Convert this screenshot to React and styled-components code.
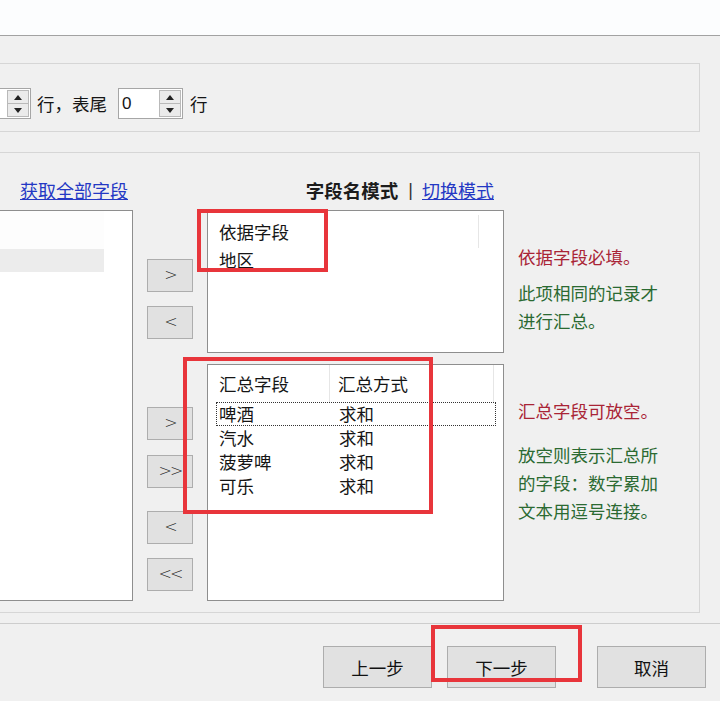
import React from 'react';
import styled, { createGlobalStyle, css } from 'styled-components';

const GlobalStyle = createGlobalStyle`
	html, body {
		margin: 0;
		padding: 0;
		background: #f0f0f0;
	}
	* {
		box-sizing: border-box;
	}
`;

const UI_FONT = '"Noto Sans CJK SC", "Liberation Sans", sans-serif';
const LIST_BORDER = '#8e8e8e';
const RED = '#e8353b';

const Window = styled.div`
	width: 720px;
	height: 701px;
	overflow: hidden;
	display: flex;
	flex-direction: column;
	background: #f0f0f0;
	font-family: ${ UI_FONT };
	font-size: 17px;
	color: #151515;
`;

const TopBand = styled.div`
	flex-shrink: 0;
	height: 36px;
	background: #fcfdfe;
	border-bottom: 1px solid #a2a2a2;
`;

const Content = styled.div`
	display: flex;
	flex-direction: column;
	padding: 27px 20px 0 0;
`;

// group boxes run off the left edge of the picture
const GroupBox = styled.div`
	border: 1px solid #d6d6d6;
	border-left: none;
	height: ${ ( { $h } ) => $h }px;
	margin-bottom: ${ ( { $mb } ) => $mb || 0 }px;
`;

const RangeRow = styled.div`
	display: flex;
	align-items: center;
	height: 31px;
	margin-top: 24px;
	line-height: 24px;
`;

const SpinInput = styled.div`
	width: ${ ( { $w } ) => $w }px;
	height: 31px;
	display: flex;
	align-items: center;
	justify-content: space-between;
	margin-left: ${ ( { $ml } ) => $ml || 0 }px;
	background: #fff;
	border: 1px solid #a6a6a6;
	${ ( { $cut } ) => $cut && css`
		border-left: none;
	` }
`;

const SpinValue = styled.span`
	padding-left: 3px;
	font-family: "Liberation Sans", sans-serif;
	font-size: 17px;
`;

const SpinButtons = styled.div`
	width: 22px;
	height: 27px;
	margin-right: 1px;
	display: flex;
	flex-direction: column;
	border: 1px solid #b9b9b9;
	background: #ebebeb;
`;

const SpinHalf = styled.div`
	flex: 1;
	display: flex;
	align-items: center;
	justify-content: center;
	& + & {
		border-top: 1px solid #b9b9b9;
	}
`;

const Arrow = styled.span`
	width: 0;
	height: 0;
	border-left: 4px solid transparent;
	border-right: 4px solid transparent;
	${ ( { $down } ) => $down
		? css`border-top: 5px solid #222;`
		: css`border-bottom: 5px solid #222;` }
`;

const Label = styled.span`
	margin-left: ${ ( { $ml } ) => $ml || 0 }px;
	font-size: 17.5px;
	white-space: nowrap;
`;

const FieldsGrid = styled.div`
	display: grid;
	grid-template-columns: 133px 46px 297px 1fr;
	grid-template-rows: 57px 391px;
	column-gap: 14px;
	padding-bottom: 11px;
`;

const HeadCell = styled.div`
	display: flex;
	justify-content: flex-end;
	align-items: center;
	padding: 0 ${ ( { $pr } ) => $pr }px 8px 0;
	font-size: 18px;
	line-height: 24px;
	align-self: end;
	white-space: nowrap;
`;

const Link = styled.a`
	color: #2438c4;
	text-decoration: underline;
	cursor: pointer;
`;

const ModeTitle = styled.span`
	font-weight: 700;
	font-size: 18.5px;
	color: #1c1c1c;
`;

const Pipe = styled.span`
	margin: 0 9px 0 10px;
	color: #333;
	font-family: "Liberation Sans", sans-serif;
`;

const SourceList = styled.div`
	background: #fff;
	border: 1px solid ${ LIST_BORDER };
	border-left: none;
`;

const SourceHeader = styled.div`
	width: 104px;
	height: 38px;
	background: #fdfdfd;
`;

const SourceRow = styled.div`
	width: 104px;
	height: 23px;
	background: #ececec;
`;

const ButtonColumn = styled.div`
	display: flex;
	flex-direction: column;
	padding-top: 49px;
`;

const MoveButton = styled.button`
	width: 46px;
	height: 33px;
	margin-top: ${ ( { $mt } ) => $mt || 0 }px;
	padding: 0 0 2px;
	background: #e1e1e1;
	border: 1px solid #adadad;
	font-family: "DejaVu Sans", sans-serif;
	font-size: 16px;
	font-weight: 300;
	color: #222;
	letter-spacing: -2px;
	transform-origin: center;
`;

const TargetColumn = styled.div`
	display: flex;
	flex-direction: column;
	gap: 11px;
`;

const ListView = styled.div`
	position: relative;
	height: ${ ( { $h } ) => $h }px;
	background: #fff;
	border: 1px solid ${ LIST_BORDER };
	font-size: 17.5px;
	line-height: 24px;
`;

const ListHeader = styled.div`
	display: flex;
	height: 37px;
	padding-top: ${ ( { $pt } ) => $pt || 0 }px;
	align-items: ${ ( { $pt } ) => $pt ? 'flex-start' : 'center' };
`;

const Col = styled.div`
	width: ${ ( { $w } ) => $w }px;
	padding-left: ${ ( { $pl } ) => $pl }px;
	white-space: nowrap;
	${ ( { $divider } ) => $divider && css`
		border-right: 1px solid #e6e6e6;
		align-self: stretch;
		display: flex;
		align-items: center;
	` }
`;

const ListRow = styled.div`
	position: relative;
	display: flex;
	height: 24px;
	align-items: center;
	${ ( { $focused } ) => $focused && css`
		&::after {
			content: "";
			position: absolute;
			left: 8px;
			width: 278px;
			top: 0;
			bottom: 0;
			border: 1px dotted #333;
		}
	` }
`;

const RedMark = styled.div`
	position: absolute;
	left: ${ ( { $l } ) => $l }px;
	top: ${ ( { $t } ) => $t }px;
	width: ${ ( { $w } ) => $w }px;
	height: ${ ( { $h } ) => $h }px;
	border: 4px solid ${ RED };
	pointer-events: none;
	z-index: 2;
`;

const Notes = styled.div`
	display: flex;
	flex-direction: column;
	padding-top: 33px;
	font-size: 17.5px;
	line-height: 28px;
`;

const Note = styled.p`
	margin: ${ ( { $mt } ) => $mt || 0 }px 0 0;
	width: 152px;
	color: ${ ( { $warn } ) => $warn ? '#a92436' : '#2b6a32' };
`;

const Footer = styled.div`
	display: flex;
	justify-content: flex-end;
	margin-top: 10px;
	padding: 22px 14px 0 0;
	border-top: 1px solid #cdcdcd;
`;

const DialogButton = styled.button`
	position: relative;
	width: 109px;
	height: 42px;
	margin-left: ${ ( { $ml } ) => $ml || 0 }px;
	padding: 0;
	background: #e1e1e1;
	border: 1px solid #adadad;
	font-family: ${ UI_FONT };
	font-size: 17.5px;
	color: #111;
`;

function Spin( { value, width, cut, ml } ) {
	return (
		<SpinInput $w={ width } $cut={ cut } $ml={ ml }>
			<SpinValue>{ value }</SpinValue>
			<SpinButtons>
				<SpinHalf><Arrow /></SpinHalf>
				<SpinHalf><Arrow $down /></SpinHalf>
			</SpinButtons>
		</SpinInput>
	);
}

const SUMMARY_ROWS = [
	[ '啤酒', '求和' ],
	[ '汽水', '求和' ],
	[ '菠萝啤', '求和' ],
	[ '可乐', '求和' ],
];

export default function App() {
	return (
		<Window>
			<GlobalStyle />
			<TopBand />
			<Content>
				<GroupBox $h={ 69 } $mb={ 20 }>
					<RangeRow>
						<Spin value="" width={ 31 } cut />
						<Label $ml={ 6 }>行，表尾</Label>
						<Spin value="0" width={ 65 } ml={ 11 } />
						<Label $ml={ 7 }>行</Label>
					</RangeRow>
				</GroupBox>

				<GroupBox $h={ 461 }>
					<FieldsGrid>
						<HeadCell $pr={ 5 }>
							<Link>获取全部字段</Link>
						</HeadCell>
						<div />
						<HeadCell $pr={ 10 }>
							<ModeTitle>字段名模式</ModeTitle>
							<Pipe>|</Pipe>
							<Link>切换模式</Link>
						</HeadCell>
						<div />

						<SourceList>
							<SourceHeader />
							<SourceRow />
						</SourceList>

						<ButtonColumn>
							<MoveButton>&gt;</MoveButton>
							<MoveButton $mt={ 14 }>&lt;</MoveButton>
							<MoveButton $mt={ 68 }>&gt;</MoveButton>
							<MoveButton $mt={ 15 }>&gt;&gt;</MoveButton>
							<MoveButton $mt={ 23 }>&lt;</MoveButton>
							<MoveButton $mt={ 14 }>&lt;&lt;</MoveButton>
						</ButtonColumn>

						<TargetColumn>
							<ListView $h={ 143 }>
								<ListHeader $pt={ 4 }>
									<Col $w={ 271 } $pl={ 11 } $divider>依据字段</Col>
								</ListHeader>
								<ListRow>
									<Col $w={ 200 } $pl={ 11 }>地区</Col>
								</ListRow>
								<RedMark $l={ -11 } $t={ -2 } $w={ 131 } $h={ 63 } />
							</ListView>

							<ListView $h={ 237 }>
								<ListHeader>
									<Col $w={ 122 } $pl={ 11 } $divider>汇总字段</Col>
									<Col $w={ 164 } $pl={ 8 } $divider>汇总方式</Col>
								</ListHeader>
								{ SUMMARY_ROWS.map( ( [ field, method ], i ) => (
									<ListRow key={ field } $focused={ i === 0 }>
										<Col $w={ 122 } $pl={ 11 }>{ field }</Col>
										<Col $w={ 164 } $pl={ 9 }>{ method }</Col>
									</ListRow>
								) ) }
								<RedMark $l={ -25 } $t={ -8 } $w={ 250 } $h={ 157 } />
							</ListView>
						</TargetColumn>

						<Notes>
							<Note $warn>依据字段必填。</Note>
							<Note $mt={ 8 }>此项相同的记录才进行汇总。</Note>
							<Note $warn $mt={ 62 }>汇总字段可放空。</Note>
							<Note $mt={ 16 }>放空则表示汇总所的字段：数字累加文本用逗号连接。</Note>
						</Notes>
					</FieldsGrid>
				</GroupBox>
			</Content>

			<Footer>
				<DialogButton>上一步</DialogButton>
				<DialogButton $ml={ 15 }>
					下一步
					<RedMark $l={ -17 } $t={ -22 } $w={ 151 } $h={ 57 } />
				</DialogButton>
				<DialogButton $ml={ 41 }>取消</DialogButton>
			</Footer>
		</Window>
	);
}
